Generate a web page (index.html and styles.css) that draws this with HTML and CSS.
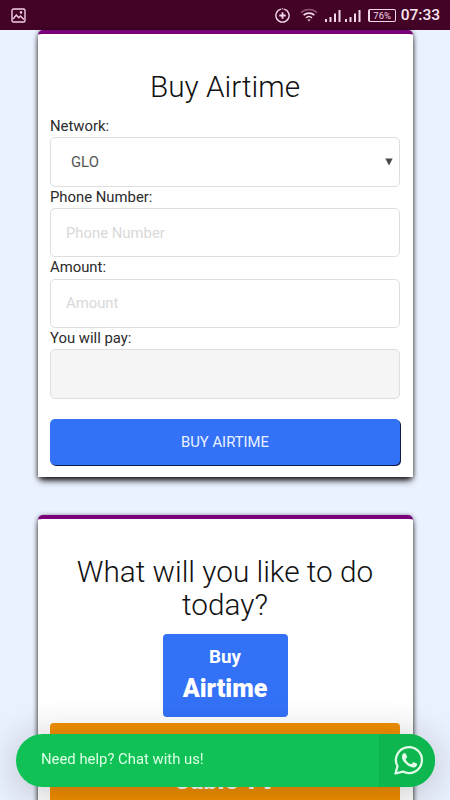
FILE: index.html
```html
<!DOCTYPE html>
<html lang="en">
<head>
<meta charset="utf-8">
<meta name="viewport" content="width=device-width, initial-scale=1">
<title>Buy Airtime</title>
<link rel="stylesheet" href="styles.css">
</head>
<body>
<header class="status">
  <svg class="status-photo" width="15" height="15" viewBox="0 0 15 15" fill="none" stroke="#f3cfe4" stroke-width="1.4">
    <rect x="1" y="1" width="13" height="13" rx="1.5"/>
    <path d="M2 11l3.3-4 2.5 2.7 1.6-1.7L13 11.5"/>
    <circle cx="10" cy="4.4" r=".6"/>
  </svg>
  <div class="status-right">
    <svg class="data" width="15" height="15" viewBox="0 0 14 14" fill="none" stroke="#f3d8e6" stroke-width="1.3">
      <path d="M8.500 1.050A6.150 6.150 0 1 1 5.500 1.050"/>
      <path d="M6.200 .85h1.600" stroke-width="1"/>
      <path d="M7 4v6M4 7h6" stroke-width="1.700"/>
    </svg>
    <svg class="wifi" width="18" height="14" viewBox="0 0 18 14" fill="none" stroke-width="1.6">
      <path d="M1 4.8a11.5 11.5 0 0 1 16 0" stroke="#8b5570"/>
      <path d="M3.6 7.2a8 8 0 0 1 10.8 0M6 9.8a4.6 4.6 0 0 1 6 0" stroke="#f3d8e6"/>
      <path d="M7.4 11.4h3.2L9 13.4z" fill="#f3d8e6"/>
    </svg>
    <svg class="signal" width="16" height="13" viewBox="0 0 16 13" fill="#f3d8e6">
      <path d="M0 10h2v3H0zM4.500 8h2v5h-2zM9 4.500h2V13H9zM13.500 1h2v12h-2z"/>
    </svg>
    <svg class="signal" width="16" height="13" viewBox="0 0 16 13" fill="#f3d8e6">
      <path d="M0 10h2v3H0zM4.500 8h2v5h-2zM9 4.500h2V13H9zM13.500 1h2v12h-2z"/>
    </svg>
    <span class="battery">76%</span>
    <span class="clock">07:33</span>
  </div>
</header>
<main class="page">
  <form class="card card-form">
    <h1 class="title">Buy Airtime</h1>
    <label class="label" for="network">Network:</label>
    <div class="field field-select" id="network"><span>GLO</span>
      <svg width="8" height="8" viewBox="0 0 8 8"><path d="M.3.5h7.4L4 7.6z" fill="#4a4a4a"/></svg>
    </div>
    <label class="label" for="phone">Phone Number:</label>
    <input class="field" id="phone" placeholder="Phone Number">
    <label class="label" for="amount">Amount:</label>
    <input class="field" id="amount" placeholder="Amount">
    <label class="label" for="pay">You will pay:</label>
    <input class="field field-off" id="pay" disabled>
    <button class="submit" type="button">BUY AIRTIME</button>
  </form>
  <section class="card card-menu">
    <h2 class="title">What will you like to do today?</h2>
    <a class="tile tile-airtime"><span>Buy</span><strong>Airtime</strong></a>
    <a class="tile tile-cable"><span>Pay</span><strong>Cable TV</strong></a>
  </section>
</main>
<aside class="chat">
  <span class="chat-text">Need help? Chat with us!</span>
  <span class="chat-icon">
    <svg width="30" height="30" viewBox="0 0 30 30">
      <path d="M1.500 28.500l2-7.200A13 13 0 1 1 8.900 26.600z" fill="none" stroke="#e2fbe9" stroke-width="2.300" stroke-linejoin="round"/>
      <path d="M10 8.200h1.100c.4 0 .6.2.8.6l1.200 2.900c.1.3.1.6-.1.9l-1.200 1.500c-.2.3-.2.5 0 .8 1.200 2 2.800 3.300 4.900 4.200.4.2.6.1.9-.1l1.300-1.600c.3-.4.5-.4.9-.2l2.800 1.300c.5.2.6.4.5.9-.2 2.100-1.900 3.100-3.700 3.100-1.800 0-5-1.200-7.500-3.700-2.300-2.300-4-4.700-4-6.900 0-1.700.9-3.700 2.100-3.700z" fill="#e2fbe9"/>
    </svg>
  </span>
</aside>
</body>
</html>
```
FILE: styles.css
```css
* { box-sizing: border-box; }
body {
  margin: 0;
  height: 800px;
  overflow: hidden;
  background: #ebf2ff;
  color: #2b2b2b;
  font: 14.85px/21.4px Roboto, sans-serif;
}
.status {
  display: flex;
  justify-content: space-between;
  height: 30px;
  padding: 0 10px 0 11px;
  background: #430327;
}
.status-photo { margin-top: 8px; }
.status-right { display: flex; align-items: center; height: 30px; }
.data { margin-right: 10px; }
.wifi { margin-right: 7px; }
.signal { margin: 0 4px 0 0; }
.signal + .signal { margin-right: 7px; }
.battery {
  width: 28px;
  height: 13px;
  margin-right: 5px;
  border: 1.5px solid #f3d8e6;
  border-left-width: 2px;
  border-radius: 2px;
  color: #f3d8e6;
  font-size: 9.5px;
  line-height: 11px;
  text-align: center;
}
.clock { color: #fbe6f1; font-size: 15.5px; font-weight: 500; line-height: 30px; }
.card {
  width: 375px;
  margin: 0 auto;
  padding: 37px 12.5px 0;
  border-top: 4px solid #780078;
  border-radius: 5px 5px 0 0;
  background: #fff;
  box-shadow: 0 5px 7px -2px #111, 0 1px 5px rgba(0, 0, 0, .6);
}
.card-form { height: 447px; }
.card-menu { height: 320px; margin-top: 38px; }
.title {
  margin: 0;
  color: #111;
  font-size: 29.75px;
  font-weight: 300;
  line-height: 32.5px;
  text-align: center;
}
.card-form .title { margin-bottom: 12.5px; }
.label { display: block; height: 21.3px; }
.field {
  display: flex;
  align-items: center;
  justify-content: space-between;
  width: 100%;
  height: 49.4px;
  padding: 0 15px;
  border: 1px solid #dedede;
  border-radius: 5px;
  outline: 0;
  background: #fff;
  color: #555;
  font: 14.85px Roboto, sans-serif;
}
.field::placeholder { color: #d9d9d9; opacity: 1; }
.field-select { padding: 0 6px 0 20px; }
.field-off { background: #f5f5f5; }
.submit {
  display: block;
  width: 100%;
  height: 46px;
  margin-top: 20.5px;
  padding: 0;
  border: 0;
  border-radius: 5px;
  background: #3371f7;
  box-shadow: 1px 1px 0 #101c45;
  color: #e9f2ff;
  font: 14.85px Roboto, sans-serif;
}
.tile {
  display: flex;
  flex-direction: column;
  align-items: center;
  border-radius: 4px;
  color: #fff;
  font-size: 18.75px;
  font-weight: 700;
}
.tile strong { font-size: 25px; }
.tile-airtime {
  width: 125px;
  height: 83px;
  margin: 13px auto 0;
  padding-top: 7px;
  background: #3371f7;
  line-height: 32px;
}
.tile-cable {
  height: 100px;
  margin-top: 6px;
  padding-top: 10px;
  background: #f49000;
  line-height: 32px;
}
.chat {
  position: fixed;
  left: 16px;
  top: 734px;
  display: flex;
  width: 419px;
  height: 53px;
  border-radius: 27px;
  overflow: hidden;
  background: #10c255;
  color: #dcffe7;
  box-shadow: 0 5px 40px rgba(0, 0, 0, .24);
}
.chat-text { flex: 1; padding-left: 25px; line-height: 51px; }
.chat-icon {
  display: flex;
  align-items: center;
  justify-content: center;
  width: 56px;
  padding: 0 0 1px 3px;
  background: #0db64e;
}
```
